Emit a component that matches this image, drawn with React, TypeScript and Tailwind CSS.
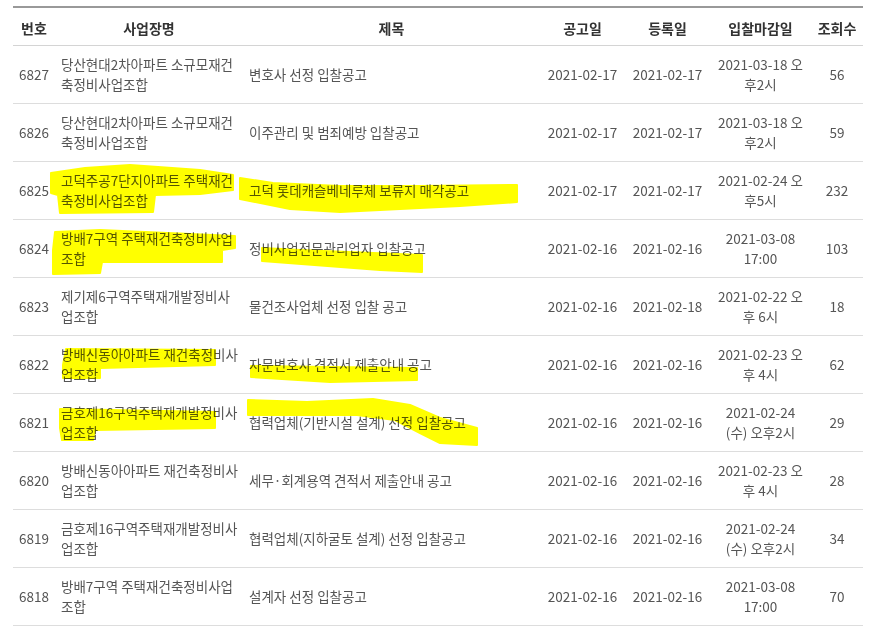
import React from "react";

type Row = {
  no: string;
  name: [string, string];
  title: string;
  d1: string;
  d2: string;
  dl: [string, string];
  views: string;
};

const rows: Row[] = [
  { no: "6827", name: ["당산현대2차아파트 소규모재건", "축정비사업조합"], title: "변호사 선정 입찰공고", d1: "2021-02-17", d2: "2021-02-17", dl: ["2021-03-18 오", "후2시"], views: "56" },
  { no: "6826", name: ["당산현대2차아파트 소규모재건", "축정비사업조합"], title: "이주관리 및 범죄예방 입찰공고", d1: "2021-02-17", d2: "2021-02-17", dl: ["2021-03-18 오", "후2시"], views: "59" },
  { no: "6825", name: ["고덕주공7단지아파트 주택재건", "축정비사업조합"], title: "고덕 롯데캐슬베네루체 보류지 매각공고", d1: "2021-02-17", d2: "2021-02-17", dl: ["2021-02-24 오", "후5시"], views: "232" },
  { no: "6824", name: ["방배7구역 주택재건축정비사업", "조합"], title: "정비사업전문관리업자 입찰공고", d1: "2021-02-16", d2: "2021-02-16", dl: ["2021-03-08", "17:00"], views: "103" },
  { no: "6823", name: ["제기제6구역주택재개발정비사", "업조합"], title: "물건조사업체 선정 입찰 공고", d1: "2021-02-16", d2: "2021-02-18", dl: ["2021-02-22 오", "후 6시"], views: "18" },
  { no: "6822", name: ["방배신동아아파트 재건축정비사", "업조합"], title: "자문변호사 견적서 제출안내 공고", d1: "2021-02-16", d2: "2021-02-16", dl: ["2021-02-23 오", "후 4시"], views: "62" },
  { no: "6821", name: ["금호제16구역주택재개발정비사", "업조합"], title: "협력업체(기반시설 설계) 선정 입찰공고", d1: "2021-02-16", d2: "2021-02-16", dl: ["2021-02-24", "(수) 오후2시"], views: "29" },
  { no: "6820", name: ["방배신동아아파트 재건축정비사", "업조합"], title: "세무·회계용역 견적서 제출안내 공고", d1: "2021-02-16", d2: "2021-02-16", dl: ["2021-02-23 오", "후 4시"], views: "28" },
  { no: "6819", name: ["금호제16구역주택재개발정비사", "업조합"], title: "협력업체(지하굴토 설계) 선정 입찰공고", d1: "2021-02-16", d2: "2021-02-16", dl: ["2021-02-24", "(수) 오후2시"], views: "34" },
  { no: "6818", name: ["방배7구역 주택재건축정비사업", "조합"], title: "설계자 선정 입찰공고", d1: "2021-02-16", d2: "2021-02-16", dl: ["2021-03-08", "17:00"], views: "70" },
];

function Highlights() {
  return (
    <svg
      className="pointer-events-none absolute left-0 top-0 mix-blend-multiply"
      width="876"
      height="629"
      viewBox="0 0 876 629"
    >
      <g fill="#ffff00" stroke="#ffff00" strokeWidth="2" strokeLinejoin="round">
        {/* 6825 name */}
        <path d="M51 173 L85 168 L130 165 L200 170 L233 175 L233 190 L200 194 L155 195 L153 212 L60 213 L58 195 L51 193 Z" />
        {/* 6825 title */}
        <path d="M240 178 L273 183 L340 186 L420 186 L517 185 L517 202 L460 206 L400 209 L340 212 L290 209 L240 199 Z" />
        {/* 6824 name */}
        <path d="M55 232 L100 230 L235 236 L235 248 L222 250 L222 262 L102 262 L100 273 L53 274 L53 250 Z" />
        {/* 6824 title */}
        <path d="M262 248 L300 250 L422 255 L422 272 L380 270 L262 261 Z" />
        {/* 6822 name */}
        <path d="M66 349 L215 350 L215 365 L100 368 L100 378 L63 378 L63 365 Z" />
        {/* 6822 title */}
        <path d="M251 366 L330 367 L417 368 L417 380 L330 382 L251 377 Z" />
        {/* 6821 name */}
        <path d="M60 409 L215 412 L215 428 L95 430 L93 440 L62 440 L60 428 Z" />
        {/* 6821 title */}
        <path d="M248 400 L307 402 L373 399 L410 405 L440 418 L477 428 L477 445 L440 443 L420 433 L395 420 L357 415 L248 415 Z" />
      </g>
    </svg>
  );
}

export default function App() {
  return (
    <div
      className="relative h-[629px] w-[876px] overflow-hidden bg-white pl-[13px] pt-[6px]"
      style={{ fontFamily: '"Noto Sans CJK KR", "Noto Sans", sans-serif' }}
    >
      <table className="w-[850px] table-fixed border-collapse border-t-2 border-[#999999] text-[13.5px] leading-[20px]">
        <colgroup>
          <col className="w-[42px]" />
          <col className="w-[188px]" />
          <col className="w-[297px]" />
          <col className="w-[85px]" />
          <col className="w-[85px]" />
          <col className="w-[101px]" />
          <col className="w-[52px]" />
        </colgroup>
        <thead>
          <tr className="h-[38px] border-b border-[#d4d4d4] text-[14px] text-[#333333]">
            <th className="px-0 pb-0 pt-[3px] text-center font-bold">번호</th>
            <th className="px-0 pb-0 pt-[3px] text-center font-bold">사업장명</th>
            <th className="px-0 pb-0 pt-[3px] text-center font-bold">제목</th>
            <th className="px-0 pb-0 pt-[3px] text-center font-bold">공고일</th>
            <th className="px-0 pb-0 pt-[3px] text-center font-bold">등록일</th>
            <th className="px-0 pb-0 pt-[3px] text-center font-bold">입찰마감일</th>
            <th className="px-0 pb-0 pt-[3px] text-center font-bold">조회수</th>
          </tr>
        </thead>
        <tbody className="text-[#555555]">
          {rows.map((r) => (
            <tr key={r.no} className="h-[58px] border-b border-[#dddddd]">
              <td className="p-0 text-center align-middle">{r.no}</td>
              <td className="px-[6px] py-0 text-left align-middle whitespace-nowrap">
                {r.name[0]}
                <br />
                {r.name[1]}
              </td>
              <td className="px-[6px] py-0 text-left align-middle whitespace-nowrap">{r.title}</td>
              <td className="p-0 text-center align-middle">{r.d1}</td>
              <td className="p-0 text-center align-middle">{r.d2}</td>
              <td className="p-0 text-center align-middle whitespace-nowrap">
                {r.dl[0]}
                <br />
                {r.dl[1]}
              </td>
              <td className="p-0 text-center align-middle">{r.views}</td>
            </tr>
          ))}
        </tbody>
      </table>
      <Highlights />
    </div>
  );
}
